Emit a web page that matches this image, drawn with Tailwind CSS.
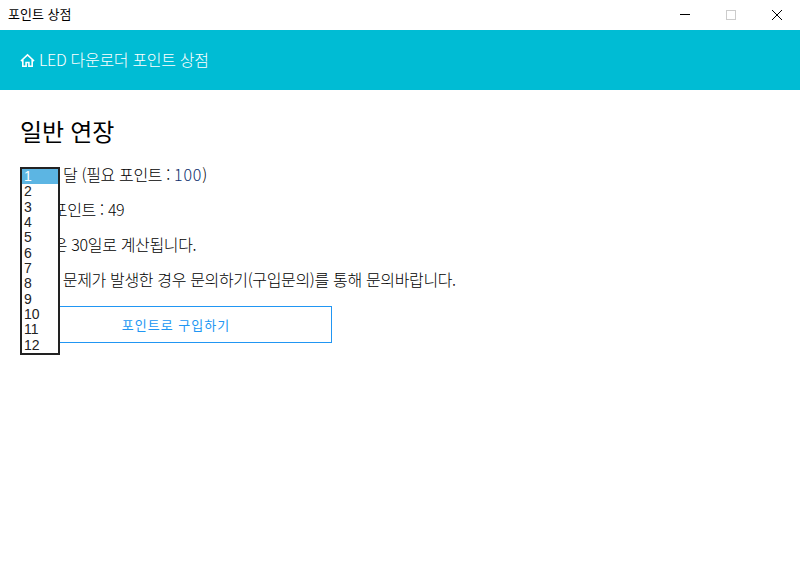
<!doctype html>
<html lang="ko"><head><meta charset="utf-8"><script src="https://cdn.jsdelivr.net/npm/@tailwindcss/browser@4"></script></head>
<body class="bg-white overflow-hidden font-['Noto_Sans_CJK_KR','Noto_Sans',sans-serif]">
<div class="relative w-[800px] h-[569px] flex flex-col">
  <div class="h-[30px] flex items-center justify-between bg-white">
    <span class="pl-2 pb-[2px] text-[13px] text-black">포인트 상점</span>
    <div class="flex items-center h-full">
      <div class="w-[46px] h-full flex items-center justify-center"><svg width="10" height="10" viewBox="0 0 10 10"><path d="M0 4.5H10" stroke="#000" fill="none"/></svg></div>
      <div class="w-[46px] h-full flex items-center justify-center"><svg width="10" height="10" viewBox="0 0 10 10"><rect x=".5" y=".5" width="9" height="9" stroke="#ccc" fill="none"/></svg></div>
      <div class="w-[46px] h-full flex items-center justify-center"><svg width="10" height="10" viewBox="0 0 10 10"><path d="M0 0L10 10M10 0L0 10" stroke="#000" fill="none"/></svg></div>
    </div>
  </div>
  <div class="h-[60px] bg-[#00bcd4] flex items-center px-5 gap-1 text-white text-[16px] font-light tracking-[-0.3px]">
    <svg width="15" height="15" viewBox="0 0 16 16" fill="none" stroke="#fff" stroke-width="1.7"><path d="M1 8.5L8 2l7 6.5M3 7v7.2h3.5v-4h3v4H13V7"/></svg>
    <span class="pb-[3px]">LED 다운로더 포인트 상점</span>
  </div>
  <div class="px-5 pt-[25px] flex flex-col items-start">
    <h1 class="text-[24px] leading-[32px] font-normal tracking-[-0.2px] text-black">일반 연장</h1>
    <div class="mt-[10px] flex flex-col items-start text-[16px] leading-[35px] font-light text-black tracking-[-0.35px]">
      <p class="pl-[43px]">달 (필요 포인트 : <span class="text-[#0d2f6e] tracking-[0.8px]">100</span>)</p>
      <p>보유 포인트 : 49</p>
      <p>한 달은 30일로 계산됩니다.</p>
      <p class="pl-[10px]">결제 문제가 발생한 경우 문의하기(구입문의)를 통해 문의바랍니다.</p>
    </div>
    <button class="mt-[9px] w-[312px] h-[37px] border border-[#2196f3] text-[#2196f3] text-[13px] tracking-[1px] flex items-center justify-center">포인트로 구입하기</button>
  </div>
  <ul class="absolute left-[20px] top-[167px] w-[40px] h-[188px] border-2 border-[#222] bg-white font-['Liberation_Sans',sans-serif] text-[14px] leading-[15.33px] text-[#222]">
    <li class="bg-[#5cb5e3] text-white pl-[2px]">1</li><li class="pl-[2px]">2</li><li class="pl-[2px]">3</li><li class="pl-[2px]">4</li><li class="pl-[2px]">5</li><li class="pl-[2px]">6</li><li class="pl-[2px]">7</li><li class="pl-[2px]">8</li><li class="pl-[2px]">9</li><li class="pl-[2px]">10</li><li class="pl-[2px]">11</li><li class="pl-[2px]">12</li>
  </ul>
</div>
</body></html>
